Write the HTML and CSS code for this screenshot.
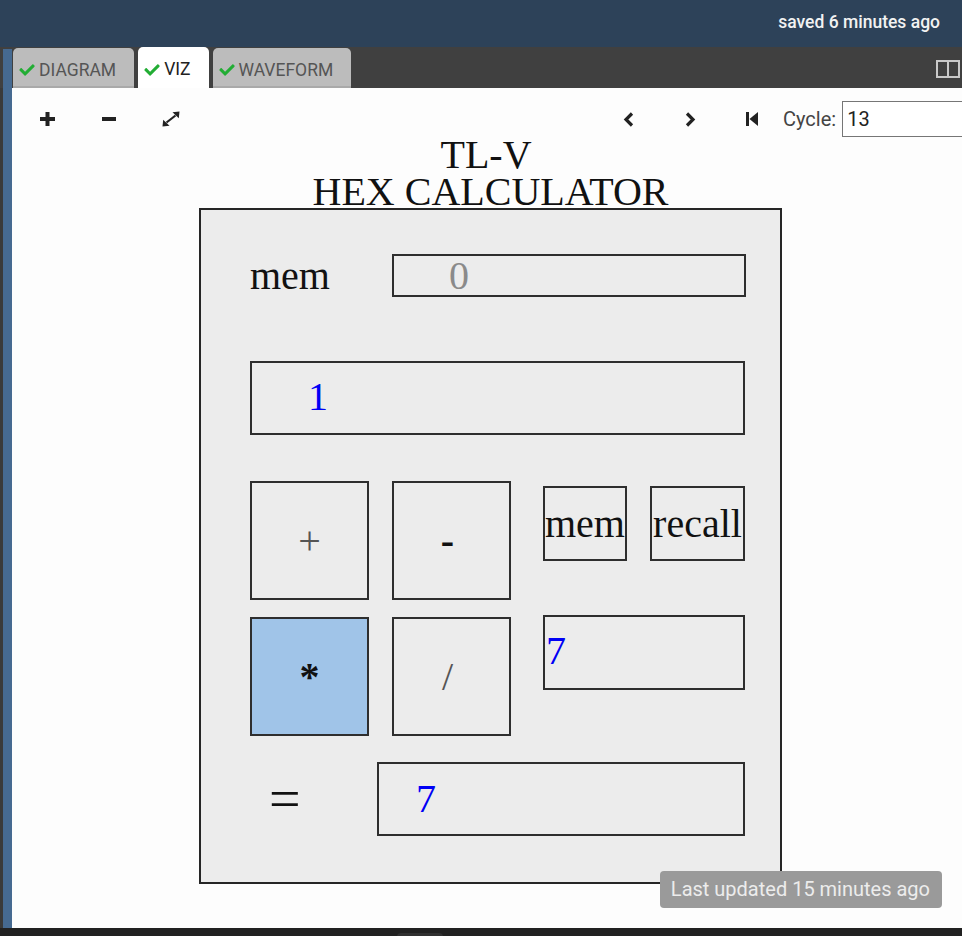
FILE: index.html
```html
<!DOCTYPE html>
<html>
<head>
<meta charset="utf-8">
<link rel="stylesheet" href="styles.css">
</head>
<body>
<div class="app">
  <header class="topbar"><span class="saved">saved 6 minutes ago</span></header>
  <nav class="tabbar">
    <div class="strip-top"></div>
    <div class="tab">
      <svg class="check" viewBox="0 0 512 400"><path d="M173.9 383.4l-166.4-166.4c-10-10-10-26.2 0-36.2l36.2-36.2c10-10 26.2-10 36.2 0L192 256.7 432.1 16.6c10-10 26.2-10 36.2 0l36.2 36.2c10 10 10 26.2 0 36.2l-294.4 294.4c-10 10-26.2 10-36.2 0z"/></svg>
      <span>DIAGRAM</span>
    </div>
    <div class="tab active">
      <svg class="check" viewBox="0 0 512 400"><path d="M173.9 383.4l-166.4-166.4c-10-10-10-26.2 0-36.2l36.2-36.2c10-10 26.2-10 36.2 0L192 256.7 432.1 16.6c10-10 26.2-10 36.2 0l36.2 36.2c10 10 10 26.2 0 36.2l-294.4 294.4c-10 10-26.2 10-36.2 0z"/></svg>
      <span>VIZ</span>
    </div>
    <div class="tab">
      <svg class="check" viewBox="0 0 512 400"><path d="M173.9 383.4l-166.4-166.4c-10-10-10-26.2 0-36.2l36.2-36.2c10-10 26.2-10 36.2 0L192 256.7 432.1 16.6c10-10 26.2-10 36.2 0l36.2 36.2c10 10 10 26.2 0 36.2l-294.4 294.4c-10 10-26.2 10-36.2 0z"/></svg>
      <span>WAVEFORM</span>
    </div>
    <svg class="split" viewBox="0 0 24 18"><rect x="1" y="1" width="22" height="16" fill="none" stroke="#c9c9c9" stroke-width="2"/><line x1="12" y1="1" x2="12" y2="17" stroke="#c9c9c9" stroke-width="2"/></svg>
  </nav>
  <div class="main">
    <div class="strip"></div>
    <div class="content">
      <div class="toolbar">
        <span class="tb-btn"><svg width="15" height="14" viewBox="0 0 15 14"><rect x="5.5" y="0" width="4" height="14" fill="#222"/><rect x="0" y="5" width="15" height="4" fill="#222"/></svg></span>
        <span class="tb-btn"><svg width="14" height="4" viewBox="0 0 14 4"><rect x="0" y="0" width="14" height="4" fill="#222"/></svg></span>
        <span class="tb-btn"><svg width="18" height="16" viewBox="0 0 18 16"><line x1="4.5" y1="11.5" x2="13.5" y2="4.5" stroke="#222" stroke-width="2.2"/><polygon points="17.5,0.5 10.5,1.2 16.8,7.2" fill="#222"/><polygon points="0.5,15.5 7.5,14.8 1.2,8.8" fill="#222"/></svg></span>
        <span class="tb-btn tb-gap"><svg width="11" height="15" viewBox="0 0 11 15"><polyline points="9,1.5 3,7.5 9,13.5" fill="none" stroke="#222" stroke-width="3.2"/></svg></span>
        <span class="tb-btn"><svg width="11" height="15" viewBox="0 0 11 15"><polyline points="2,1.5 8,7.5 2,13.5" fill="none" stroke="#222" stroke-width="3.2"/></svg></span>
        <span class="tb-btn"><svg width="12" height="14" viewBox="0 0 12 14"><rect x="0" y="0" width="3" height="14" fill="#222"/><polygon points="12,0 12,14 3.5,7" fill="#222"/></svg></span>
        <label class="cycle-label">Cycle:</label>
        <input class="cycle-input" type="text" value="13">
      </div>
      <div class="stage">
        <div class="title">
          <div class="title-line first">TL-V</div>
          <div class="title-line">HEX CALCULATOR</div>
        </div>
        <div class="calc">
          <div class="mem-row">
            <span class="mem-label">mem</span>
            <div class="mem-display"><span class="gray">0</span></div>
          </div>
          <div class="display"><span class="blue">1</span></div>
          <div class="keys">
            <div class="ops">
              <div class="key light">+</div>
              <div class="key shift bold">-</div>
              <div class="key selected bold">*</div>
              <div class="key light shift">/</div>
            </div>
            <div class="side">
              <div class="side-row">
                <div class="small-btn mem-btn">mem</div>
                <div class="small-btn recall-btn">recall</div>
              </div>
              <div class="operand"><span class="blue">7</span></div>
            </div>
          </div>
          <div class="result-row">
            <span class="equals">=</span>
            <div class="result"><span class="blue">7</span></div>
          </div>
        </div>
      </div>
      <div class="badge">Last updated 15 minutes ago</div>
    </div>
  </div>
  <div class="bottombar"><span class="thumb"></span></div>
</div>
</body>
</html>
```

FILE: styles.css
```css
* { box-sizing: border-box; }
html, body { margin: 0; padding: 0; }
body {
  width: 962px;
  height: 936px;
  overflow: hidden;
  font-family: Roboto, "Liberation Sans", Arial, sans-serif;
  background: #222;
}
.app {
  display: flex;
  flex-direction: column;
  width: 962px;
  height: 936px;
}
.topbar {
  height: 47px;
  flex-shrink: 0;
  background: #2d4259;
  display: flex;
  justify-content: flex-end;
  align-items: flex-start;
  padding: 12px 22px 0 0;
}
.saved {
  color: #f2f2f2;
  font-size: 17.5px;
  font-weight: 500;
  line-height: 20px;
}
.tabbar {
  height: 41px;
  flex-shrink: 0;
  background: #404040;
  display: flex;
  align-items: flex-end;
}
.strip-top {
  width: 9px;
  height: 39px;
  margin-left: 3px;
  background: #466a91;
}
.tab {
  height: 40px;
  margin-left: 4px;
  padding: 4px 18px 0 6px;
  display: flex;
  align-items: center;
  gap: 4px;
  background: #bcbcbc;
  border-radius: 5px 5px 0 0;
  box-shadow: inset 0 -2px 0 #a9a9a9;
  color: #555;
  font-size: 17.5px;
  line-height: 21px;
}
.strip-top + .tab { margin-left: 1px; }
.tab.active {
  height: 41px;
  background: #fff;
  box-shadow: none;
  color: #222;
}
.check {
  width: 16px;
  height: 12px;
  fill: #22ad34;
  flex-shrink: 0;
}
.split {
  width: 24px;
  height: 18px;
  margin-left: auto;
  margin-right: 2px;
  align-self: flex-start;
  margin-top: 13px;
}
.main {
  flex: 1;
  display: flex;
  min-height: 0;
}
.strip {
  width: 12px;
  flex-shrink: 0;
  background: #466a91;
  border-left: 3px solid #3a3a3a;
}
.content {
  flex: 1;
  position: relative;
  background: #fdfdfd;
  overflow: hidden;
}
.toolbar {
  display: flex;
  align-items: center;
  height: 36px;
  margin-top: 13px;
  padding-left: 4px;
  white-space: nowrap;
}
.tb-btn {
  width: 62px;
  flex-shrink: 0;
  display: flex;
  justify-content: center;
  align-items: center;
}
.tb-gap { margin-left: 395px; }
.cycle-label {
  flex-shrink: 0;
  color: #444;
  font-size: 20px;
  margin-right: 6px;
}
.cycle-input {
  flex-shrink: 0;
  width: 160px;
  height: 36px;
  border: 1px solid #767676;
  padding: 0 4px;
  font-family: Roboto, "Liberation Sans", Arial, sans-serif;
  font-size: 20px;
  color: #222;
  background: #fff;
  outline: none;
}
.stage {
  padding-left: 187px;
  width: 770px;
}
.title {
  margin-top: -1px;
  text-align: center;
  font-family: "Liberation Serif", "Times New Roman", serif;
  font-size: 40px;
  color: #111;
}
.title-line {
  height: 37px;
  line-height: 37px;
}
.title-line.first { padding-right: 9px; }
.calc {
  position: relative;
  margin-top: -2px;
  width: 583px;
  height: 676px;
  border: 2px solid #262626;
  background: #ececec;
  padding: 44px 0 0 49px;
  font-family: "Liberation Serif", "Times New Roman", serif;
  font-size: 40px;
  color: #111;
}
.mem-row {
  display: flex;
  align-items: center;
  height: 43px;
}
.mem-label {
  width: 142px;
  line-height: 43px;
}
.mem-display {
  width: 354px;
  height: 43px;
  border: 2px solid #2e2e2e;
  padding-left: 55px;
  line-height: 39px;
}
.gray { color: #8a8a8a; }
.blue { color: #0000f5; }
.display {
  margin-top: 64px;
  width: 495px;
  height: 74px;
  border: 2px solid #2e2e2e;
  padding-left: 56px;
  line-height: 68px;
}
.keys {
  display: flex;
  margin-top: 46px;
}
.ops {
  display: grid;
  grid-template-columns: 119px 119px;
  grid-template-rows: 119px 119px;
  column-gap: 23px;
  row-gap: 17px;
}
.key {
  border: 2px solid #2e2e2e;
  display: flex;
  justify-content: center;
  align-items: center;
  color: #111;
}
.key.light { color: #555; }
.key.bold { font-weight: bold; }
.key.shift { padding-right: 8px; }
.key.selected { background: #a0c4e8; }
.side {
  margin-left: 32px;
  display: flex;
  flex-direction: column;
}
.side-row {
  display: flex;
  gap: 23px;
  margin-top: 5px;
}
.small-btn {
  height: 75px;
  border: 2px solid #2e2e2e;
  display: flex;
  justify-content: center;
  align-items: center;
  white-space: nowrap;
}
.mem-btn { width: 84px; }
.recall-btn { width: 95px; }
.operand {
  margin-top: 54px;
  width: 202px;
  height: 75px;
  border: 2px solid #2e2e2e;
  padding-left: 1px;
  line-height: 67px;
}
.result-row {
  display: flex;
  align-items: center;
  margin-top: 26px;
}
.equals {
  width: 127px;
  padding-left: 19px;
  font-size: 56px;
}
.result {
  width: 368px;
  height: 74px;
  border: 2px solid #2e2e2e;
  padding-left: 37px;
  line-height: 70px;
}
.badge {
  position: absolute;
  right: 20px;
  bottom: 20px;
  height: 37px;
  padding: 0 12px 0 11px;
  border-radius: 4px;
  background: #9a9a9a;
  color: #ececec;
  font-size: 20px;
  line-height: 37px;
  white-space: nowrap;
}
.bottombar {
  height: 8px;
  flex-shrink: 0;
  background: #212121;
  position: relative;
}
.thumb {
  position: absolute;
  left: 397px;
  top: 5px;
  width: 46px;
  height: 6px;
  border-radius: 4px 4px 0 0;
  background: #303030;
}
```
